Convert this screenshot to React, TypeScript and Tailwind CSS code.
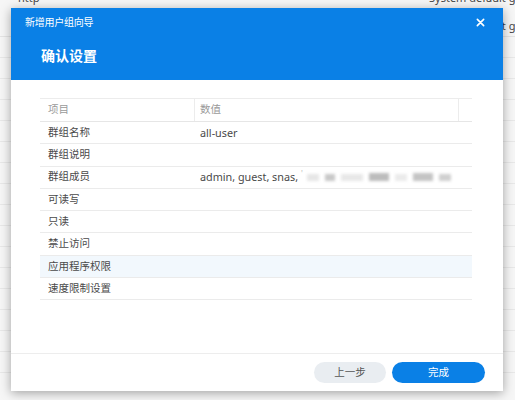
import React from 'react';

const rows: { label: string; value?: string; members?: boolean; active?: boolean }[] = [
  { label: '群组名称', value: 'all-user' },
  { label: '群组说明' },
  { label: '群组成员', members: true },
  { label: '可读写' },
  { label: '只读' },
  { label: '禁止访问' },
  { label: '应用程序权限', active: true },
  { label: '速度限制设置' },
];

const font = { fontFamily: '"Noto Sans", "Noto Sans CJK SC", sans-serif' };

export default function App() {
  return (
    <div className="relative w-[515px] h-[400px] overflow-hidden bg-[#f6f6f6] text-[#333]" style={font}>
      {/* page behind the dialog */}
      <div className="flex flex-col">
        <div className="flex h-[21px] items-center text-[11px] text-[#444] -mt-[12px]">
          <span className="pl-[18px]">http</span>
          <span className="ml-auto w-[86px] whitespace-nowrap">System default group</span>
        </div>
        <div className="flex h-[21px] items-center text-[11px] text-[#444] mt-[7px] border-b border-[#e4e4e4]">
          <span className="ml-auto w-[86px] whitespace-nowrap">System default g</span>
        </div>
        {Array.from({ length: 16 }).map((_, i) => (
          <div key={i} className="h-[21px] border-b border-[#e8e8e8]" />
        ))}
      </div>

      {/* dialog */}
      <div className="absolute left-[11px] top-[8px] w-[492px] h-[383px] bg-white flex flex-col shadow-[0_2px_10px_rgba(0,0,0,0.35)]">
        <div className="h-[72px] bg-[#0a80e6] text-white flex flex-col">
          <div className="flex items-center h-[28px] pl-[14px] pr-[18px]">
            <span className="text-[10px] tracking-tight">新增用户组向导</span>
            <svg className="ml-auto" width="9" height="9" viewBox="0 0 10 10">
              <path d="M1.5 1.5l7 7M8.5 1.5l-7 7" stroke="#fff" strokeWidth="1.8" strokeLinecap="round" />
            </svg>
          </div>
          <div className="pl-[30px] pt-[9px] text-[14px] font-bold">确认设置</div>
        </div>

        <div className="flex-1 pt-[18px] px-[29px]">
          <div className="w-[432px] border-t border-[#ececec] text-[10.5px]">
            <div className="flex h-[23px] items-center border-b border-[#e6e6e6] text-[#9a9a9a]">
              <div className="w-[155px] pl-[8px] h-full flex items-center border-r border-[#ececec]">项目</div>
              <div className="w-[264px] pl-[5px] h-full flex items-center border-r border-[#ececec]">数值</div>
              <div className="flex-1" />
            </div>
            {rows.map((r) => (
              <div
                key={r.label}
                className={`flex h-[22.3px] items-center border-b border-[#ebebeb] text-[#4a4a4a] ${r.active ? 'bg-[#f2f8fd]' : ''}`}
              >
                <div className="w-[155px] pl-[8px]">{r.label}</div>
                <div className="flex-1 pl-[5px] flex items-center text-[10.8px]">
                  {r.value}
                  {r.members && (
                    <>
                      <span className="whitespace-pre">admin, guest, snas, </span>
                      <span className="text-[#bbb] text-[8px] -mt-[6px] mr-[4px]">'</span>
                      <div className="flex items-center gap-[6px] blur-[1.5px]">
                        <div className="w-[12px] h-[7px] bg-[#e6e6e6]" />
                        <div className="w-[10px] h-[7px] bg-[#c8c8c8]" />
                        <div className="w-[22px] h-[7px] bg-[#e8e8e8]" />
                        <div className="w-[20px] h-[8px] bg-[#bcbcbc]" />
                        <div className="w-[12px] h-[7px] bg-[#ebebeb]" />
                        <div className="w-[20px] h-[8px] bg-[#c4c4c4]" />
                        <div className="w-[12px] h-[7px] bg-[#d0d0d0]" />
                      </div>
                    </>
                  )}
                </div>
              </div>
            ))}
          </div>
        </div>

        <div className="h-[38px] border-t border-[#ededed] flex items-center justify-end pr-[18px] gap-[6px]">
          <button className="w-[72px] h-[21px] rounded-full bg-[#e9edf1] text-[10.5px] text-[#555]">上一步</button>
          <button className="w-[93px] h-[21px] rounded-full bg-[#0a80e6] text-[10.5px] text-white">完成</button>
        </div>
      </div>
    </div>
  );
}
